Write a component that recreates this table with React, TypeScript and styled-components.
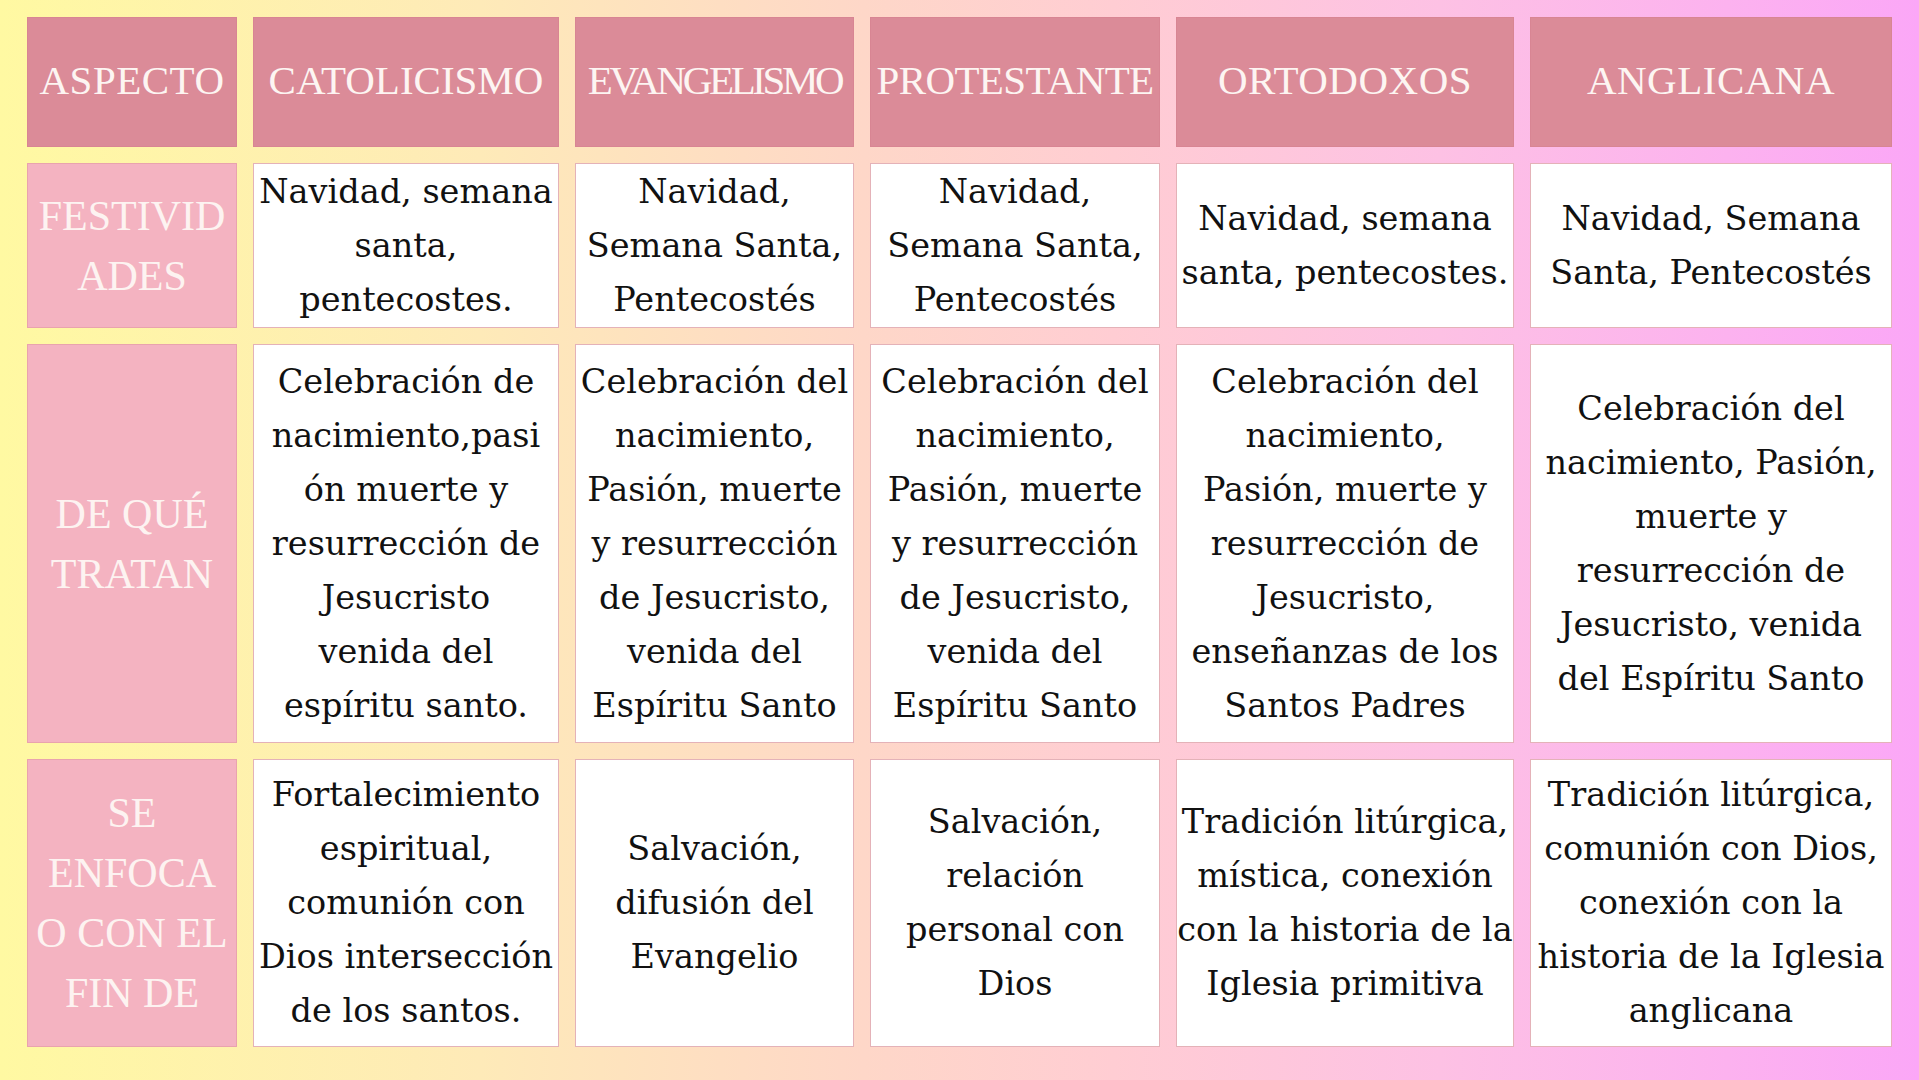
import React from "react";
import styled, { createGlobalStyle } from "styled-components";

const GlobalStyle = createGlobalStyle`
  html, body {
    margin: 0;
    padding: 0;
    width: 1919px;
    height: 1080px;
    overflow: hidden;
  }
  body {
    background: linear-gradient(90deg, #fff9a2 0%, #feeab8 25%, #fed7c8 45%, #ffcdd3 58%, #fdc1e4 75%, #fcb2ef 90%, #fba7f7 100%);
    font-family: "DejaVu Serif", serif;
  }
`;

const Page = styled.main`
  width: 1919px;
  height: 1080px;
  box-sizing: border-box;
  padding: 17px 27px 31px 27px;
`;

const Table = styled.div`
  display: grid;
  grid-template-columns: 210px 306px 279px 290px 338px 362px;
  grid-template-rows: 130px 165px 399px 288px;
  column-gap: 16px;
  row-gap: 16px;
`;

const CellBase = styled.div`
  box-sizing: border-box;
  display: flex;
  flex-direction: column;
  align-items: center;
  justify-content: center;
  text-align: center;
  white-space: nowrap;
`;

const HeadCell = styled(CellBase)<{ $spacing: number }>`
  background: #db8b98;
  border: 1px solid #d88593;
  color: #fdf5f2;
  font-family: "Liberation Serif", serif;
  font-size: 41px;
  letter-spacing: ${(p) => p.$spacing}px;
  padding-bottom: 4px;
`;

const LabelCell = styled(CellBase)`
  background: #f4b3c1;
  border: 1px solid #e9a3ae;
  color: #fdf3f1;
  font-family: "Liberation Serif", serif;
  font-size: 42px;
  line-height: 60px;
`;

const DataCell = styled(CellBase)`
  background: #ffffff;
  border: 1px solid #e4b2b8;
  color: #111111;
  font-family: "DejaVu Serif", serif;
  font-size: 33.5px;
  line-height: 54px;
`;

const Line = styled.span`
  display: block;
`;

type Row = { label: string[]; cells: string[][] };

const headers: { text: string; spacing: number }[] = [
  { text: "ASPECTO", spacing: 0.5 },
  { text: "CATOLICISMO", spacing: 0 },
  { text: "EVANGELISMO", spacing: -3.4 },
  { text: "PROTESTANTE", spacing: -0.6 },
  { text: "ORTODOXOS", spacing: 0.5 },
  { text: "ANGLICANA", spacing: 0.5 },
];

const rows: Row[] = [
  {
    label: ["FESTIVID", "ADES"],
    cells: [
      ["Navidad, semana", "santa,", "pentecostes."],
      ["Navidad,", "Semana Santa,", "Pentecostés"],
      ["Navidad,", "Semana Santa,", "Pentecostés"],
      ["Navidad, semana", "santa, pentecostes."],
      ["Navidad, Semana", "Santa, Pentecostés"],
    ],
  },
  {
    label: ["DE QUÉ", "TRATAN"],
    cells: [
      [
        "Celebración de",
        "nacimiento,pasi",
        "ón muerte y",
        "resurrección de",
        "Jesucristo",
        "venida del",
        "espíritu santo.",
      ],
      [
        "Celebración del",
        "nacimiento,",
        "Pasión, muerte",
        "y resurrección",
        "de Jesucristo,",
        "venida del",
        "Espíritu Santo",
      ],
      [
        "Celebración del",
        "nacimiento,",
        "Pasión, muerte",
        "y resurrección",
        "de Jesucristo,",
        "venida del",
        "Espíritu Santo",
      ],
      [
        "Celebración del",
        "nacimiento,",
        "Pasión, muerte y",
        "resurrección de",
        "Jesucristo,",
        "enseñanzas de los",
        "Santos Padres",
      ],
      [
        "Celebración del",
        "nacimiento, Pasión,",
        "muerte y",
        "resurrección de",
        "Jesucristo, venida",
        "del Espíritu Santo",
      ],
    ],
  },
  {
    label: ["SE", "ENFOCA", "O CON EL", "FIN DE"],
    cells: [
      [
        "Fortalecimiento",
        "espiritual,",
        "comunión con",
        "Dios intersección",
        "de los santos.",
      ],
      ["Salvación,", "difusión del", "Evangelio"],
      ["Salvación,", "relación", "personal con", "Dios"],
      [
        "Tradición litúrgica,",
        "mística, conexión",
        "con la historia de la",
        "Iglesia primitiva",
      ],
      [
        "Tradición litúrgica,",
        "comunión con Dios,",
        "conexión con la",
        "historia de la Iglesia",
        "anglicana",
      ],
    ],
  },
];

export default function App() {
  return (
    <>
      <GlobalStyle />
      <Page>
        <Table>
          {headers.map((h) => (
            <HeadCell key={h.text} $spacing={h.spacing}>
              {h.text}
            </HeadCell>
          ))}
          {rows.map((r, ri) => (
            <React.Fragment key={ri}>
              <LabelCell>
                {r.label.map((l, i) => (
                  <Line key={i}>{l}</Line>
                ))}
              </LabelCell>
              {r.cells.map((c, ci) => (
                <DataCell key={ci}>
                  {c.map((l, i) => (
                    <Line key={i}>{l}</Line>
                  ))}
                </DataCell>
              ))}
            </React.Fragment>
          ))}
        </Table>
      </Page>
    </>
  );
}
